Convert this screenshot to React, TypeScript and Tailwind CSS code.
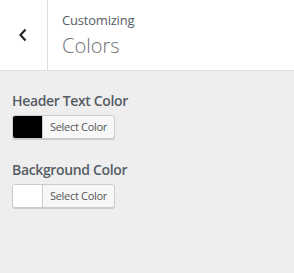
import React from 'react';

const ColorControl: React.FC<{ label: string; color: string }> = ({ label, color }) => {
  return (
    <div className="mb-[21px]">
      <div className="text-[14px] leading-[20px] font-semibold tracking-[-0.35px] text-[#555d66] mb-[4px]">{label}</div>
      <button className="flex h-[24px] w-[103px] items-stretch rounded-[3px] border border-[#cccccc] bg-[#f7f7f7] shadow-[0_1px_0_#cccccc] overflow-hidden">
        <span className="w-[30px] border-r border-[#cccccc]" style={{ backgroundColor: color }} />
        <span className="flex flex-1 items-center justify-center text-[11px] tracking-[-0.3px] text-[#555555]">Select Color</span>
      </button>
    </div>
  );
};

const App: React.FC = () => {
  return (
    <div className="w-[294px] h-[273px] bg-[#eeeeee] font-['Open_Sans',sans-serif]">
      {/* Header */}
      <div className="flex h-[71px] bg-white border-b border-[#dddddd]">
        <div className="flex w-[48px] items-center justify-center border-r border-[#dddddd]">
          <svg width="10" height="14" viewBox="0 0 10 14" className="ml-[-2px]">
            <polyline points="7.5,1.5 2.5,7 7.5,12.5" fill="none" stroke="#23282d" strokeWidth="2.2" />
          </svg>
        </div>
        <div className="flex flex-col pl-[14px] pt-[11px]">
          <span className="text-[13px] leading-[18px] tracking-[-0.2px] text-[#555d66]">Customizing</span>
          <span className="text-[20px] leading-[28px] font-light text-[#6c7177] mt-[3px]">Colors</span>
        </div>
      </div>

      {/* Controls */}
      <div className="px-[12px] pt-[20px]">
        <ColorControl label="Header Text Color" color="#000000" />
        <ColorControl label="Background Color" color="#ffffff" />
      </div>
    </div>
  );
};

export default App;
